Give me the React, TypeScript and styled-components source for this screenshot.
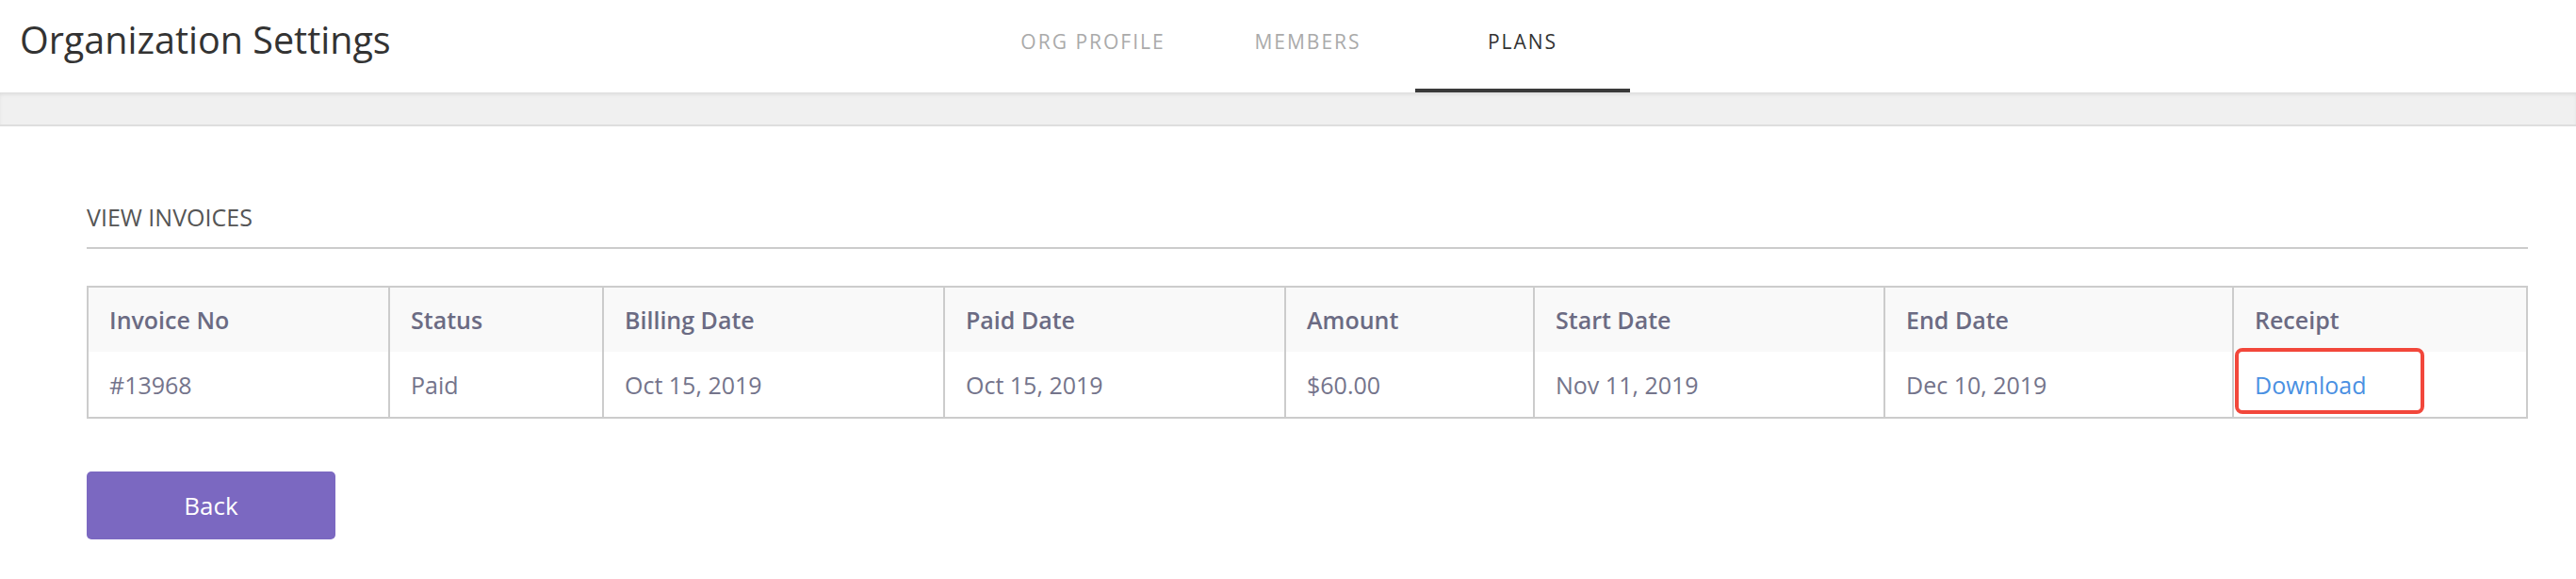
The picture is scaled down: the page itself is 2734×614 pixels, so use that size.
import React from "react";
import styled, { createGlobalStyle } from "styled-components";

const GlobalStyle = createGlobalStyle`
  *, *::before, *::after { box-sizing: border-box; }
  html, body { margin: 0; padding: 0; background: #ffffff; }
  body {
    font-family: "Open Sans", "Noto Sans", "Liberation Sans", sans-serif;
    color: #333333;
    -webkit-font-smoothing: antialiased;
  }
`;

const Page = styled.div`
  width: 100%;
  min-height: 614px;
  background: #ffffff;
`;

const Header = styled.header`
  display: flex;
  height: 98px;
  padding-left: 21px;
  background: #ffffff;
`;

const Title = styled.h1`
  flex: 0 0 1025px;
  margin: 0;
  padding-top: 16px;
  font-size: 39.5px;
  line-height: 52px;
  font-weight: 400;
  color: #333333;
  white-space: nowrap;
`;

const Tabs = styled.nav`
  display: flex;
  height: 100%;
`;

const Tab = styled.a<{ $active?: boolean }>`
  display: block;
  width: 228px;
  height: 100%;
  padding-top: 30px;
  text-align: center;
  font-size: 21px;
  line-height: 28px;
  letter-spacing: 2px;
  text-transform: uppercase;
  text-decoration: none;
  color: ${(p) => (p.$active ? "#333333" : "#aaaaaa")};
  border-bottom: 4px solid ${(p) => (p.$active ? "#3a3a3a" : "transparent")};
  cursor: pointer;
`;

const Band = styled.div`
  height: 36px;
  background: #f0f0f0;
  box-shadow: inset 0 3px 4px -1px rgba(0, 0, 0, 0.09);
  border-bottom: 2px solid #dedede;
`;

const Main = styled.main`
  padding: 79px 51px 40px 92px;
`;

const SectionTitle = styled.h2`
  margin: 0;
  padding-bottom: 15px;
  border-bottom: 2px solid #cccccc;
  font-size: 25px;
  line-height: 34px;
  font-weight: 400;
  color: #555555;
  text-transform: uppercase;
`;

const columns = "318fr 227fr 362fr 362fr 264fr 372fr 370fr 312fr";

const InvoiceTable = styled.div`
  margin-top: 39px;
  border: 2px solid #cccccc;
`;

const Row = styled.div<{ $head?: boolean }>`
  display: grid;
  grid-template-columns: ${columns};
  height: ${(p) => (p.$head ? "68px" : "69px")};
  background: ${(p) => (p.$head ? "#f9f9f9" : "#ffffff")};
`;

const Cell = styled.div<{ $head?: boolean }>`
  position: relative;
  display: flex;
  align-items: center;
  padding: 0 22px;
  font-size: 25px;
  line-height: 34px;
  font-weight: ${(p) => (p.$head ? 600 : 400)};
  color: ${(p) => (p.$head ? "#6b6b83" : "#74748b")};
  white-space: nowrap;
  & + & {
    border-left: 2px solid #cccccc;
  }
`;

const DownloadLink = styled.a`
  color: #4a90e2;
  text-decoration: none;
  cursor: pointer;
`;

const Highlight = styled.span`
  position: absolute;
  left: 1px;
  top: -4px;
  width: 201px;
  height: 70px;
  border: 4px solid #f2473b;
  border-radius: 8px;
  pointer-events: none;
`;

const BackButton = styled.button`
  display: block;
  margin-top: 56px;
  width: 264px;
  height: 72px;
  border: none;
  border-radius: 5px;
  background: #7b68c1;
  color: #ffffff;
  font-family: inherit;
  font-size: 26px;
  font-weight: 500;
  cursor: pointer;
`;

const headers = [
  "Invoice No",
  "Status",
  "Billing Date",
  "Paid Date",
  "Amount",
  "Start Date",
  "End Date",
  "Receipt",
];

const invoice = {
  no: "#13968",
  status: "Paid",
  billing: "Oct 15, 2019",
  paid: "Oct 15, 2019",
  amount: "$60.00",
  start: "Nov 11, 2019",
  end: "Dec 10, 2019",
};

export default function App() {
  return (
    <Page>
      <GlobalStyle />
      <Header>
        <Title>Organization Settings</Title>
        <Tabs>
          <Tab>Org Profile</Tab>
          <Tab>Members</Tab>
          <Tab $active>Plans</Tab>
        </Tabs>
      </Header>
      <Band />
      <Main>
        <SectionTitle>View Invoices</SectionTitle>
        <InvoiceTable>
          <Row $head>
            {headers.map((h) => (
              <Cell $head key={h}>
                {h}
              </Cell>
            ))}
          </Row>
          <Row>
            <Cell>{invoice.no}</Cell>
            <Cell>{invoice.status}</Cell>
            <Cell>{invoice.billing}</Cell>
            <Cell>{invoice.paid}</Cell>
            <Cell>{invoice.amount}</Cell>
            <Cell>{invoice.start}</Cell>
            <Cell>{invoice.end}</Cell>
            <Cell>
              <Highlight />
              <DownloadLink>Download</DownloadLink>
            </Cell>
          </Row>
        </InvoiceTable>
        <BackButton>Back</BackButton>
      </Main>
    </Page>
  );
}
